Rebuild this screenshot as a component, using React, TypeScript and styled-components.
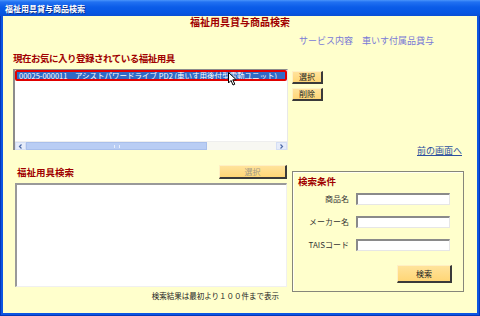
import React from "react";
import styled, { createGlobalStyle } from "styled-components";

const GlobalStyle = createGlobalStyle`
  html, body {
    margin: 0;
    padding: 0;
  }
  body {
    font-family: "Noto Sans CJK JP", "Noto Sans", sans-serif;
    background: #ffffff;
  }
  * {
    box-sizing: border-box;
  }
`;

const Window = styled.div`
  position: relative;
  width: 480px;
  height: 316px;
  display: flex;
  flex-direction: column;
  background: #0c55e2;
  border-left: 1px solid #0536b8;
  border-right: 1px solid #0536b8;
  border-bottom: 1px solid #0536b8;
`;

const TitleBar = styled.div`
  height: 16px;
  margin: 0 -1px;
  padding: 0 5px;
  display: flex;
  align-items: center;
  background: linear-gradient(
    to bottom,
    #4a94fb 0,
    #2171f2 2px,
    #0b5ce8 45%,
    #0656e3 80%,
    #0a4fd4 100%
  );
  color: #ffffff;
  font-size: 8px;
  font-weight: bold;
  text-shadow: 1px 1px 0 #0a2e8a;
`;

const Body = styled.div`
  flex: 1;
  margin: 0 2px 2px;
  background: #ffffcc;
  display: flex;
  flex-direction: column;
`;

const PageTitle = styled.h1`
  margin: 0;
  font-size: 10px;
  line-height: 11px;
  font-weight: bold;
  color: #a00000;
  text-align: center;
`;

const ServiceLine = styled.div`
  margin-top: 8px;
  padding-left: 296px;
  font-size: 9px;
  line-height: 12px;
  color: #7a7ad6;
  white-space: pre;
`;

const SectionLabel = styled.div<{ $indent?: number }>`
  padding-left: ${(p) => p.$indent ?? 0}px;
  font-size: 9.5px;
  line-height: 12px;
  font-weight: bold;
  color: #a00000;
  white-space: nowrap;
`;

const FavLabel = styled(SectionLabel)`
  margin-top: 5px;
  letter-spacing: -0.5px;
`;

const UpperRow = styled.div`
  margin-top: 5px;
  padding-left: 10px;
  height: 87px;
  display: flex;
  gap: 4px;
`;

const ListBox = styled.div`
  width: 275px;
  height: 81px;
  display: flex;
  flex-direction: column;
  background: #ffffff;
  border-style: solid;
  border-width: 1px 1px 0 2px;
  border-color: #8c8c8c #e8e8e8 #e8e8e8 #8c8c8c;
`;

const SelectedRow = styled.div`
  height: 11px;
  padding-left: 2px;
  background: #316ac5;
  border: 2px solid #e00000;
  border-radius: 2px;
  color: #ffffff;
  font-size: 7.5px;
  line-height: 7px;
  white-space: pre;
  overflow: hidden;
`;

const ListSpace = styled.div`
  flex: 1;
`;

const ScrollBar = styled.div`
  height: 9px;
  display: flex;
  background: #f7f7f2;
  border-top: 1px solid #eeeeee;
`;

const ScrollArrow = styled.div`
  width: 11px;
  display: flex;
  align-items: center;
  justify-content: center;
  background: #e6ecfa;
  border: 1px solid #d4def4;
`;

const ScrollThumb = styled.div<{ $width: number }>`
  width: ${(p) => p.$width}px;
  display: flex;
  align-items: center;
  justify-content: center;
  background: #b9cdf4;
  border: 1px solid #a9bfeb;
`;

const Grip = styled.div`
  width: 6px;
  height: 3px;
  border-left: 1px solid #e7eefc;
  border-right: 1px solid #e7eefc;
`;

const ScrollTrack = styled.div`
  flex: 1;
`;

const SideColumn = styled.div`
  flex: 1;
  display: flex;
  flex-direction: column;
  gap: 4px;
  padding-top: 2px;
  padding-right: 15px;
`;

const ActionButton = styled.button<{ $w: number; $h: number; $disabled?: boolean }>`
  width: ${(p) => p.$w}px;
  height: ${(p) => p.$h}px;
  padding: 0;
  display: flex;
  align-items: center;
  justify-content: center;
  font-family: inherit;
  font-size: 8px;
  line-height: 1;
  color: ${(p) => (p.$disabled ? "#a39a86" : "#202020")};
  background: linear-gradient(to bottom, #ffe39c, #ffd676);
  border-style: solid;
  border-width: 1px 2px 2px 1px;
  border-color: #fff0c4 #3a3a3a #3a3a3a #fff0c4;
  cursor: default;
`;

const BackLink = styled.a`
  margin-top: auto;
  align-self: flex-end;
  font-size: 9px;
  line-height: 10px;
  color: #2d4f9e;
  text-decoration: underline;
`;

const LowerGrid = styled.div`
  padding-left: 12px;
  display: grid;
  grid-template-columns: 272px 172px;
  column-gap: 5px;
`;

const LeftColumn = styled.div`
  display: flex;
  flex-direction: column;
`;

const SearchHeader = styled.div`
  margin-top: 9px;
  height: 14px;
  padding-left: 2px;
  display: flex;
  align-items: center;
  justify-content: space-between;
`;

const ResultBox = styled.div`
  margin-top: 4px;
  height: 104px;
  background: #ffffff;
  border-style: solid;
  border-width: 2px 1px 1px 2px;
  border-color: #999999 #f0f0f0 #f0f0f0 #999999;
`;

const Footnote = styled.div`
  margin-top: 4px;
  padding-right: 8px;
  text-align: right;
  font-size: 7.5px;
  line-height: 10px;
  color: #222222;
`;

const CriteriaBox = styled.div`
  margin-top: 15px;
  height: 121px;
  padding: 3px 11px 0 0;
  display: flex;
  flex-direction: column;
  border: 1px solid #86867a;
  box-shadow: inset 1px 1px 0 #fffff4;
`;

const FieldGrid = styled.div`
  margin-top: 6px;
  display: grid;
  grid-template-columns: 56px 94px;
  grid-auto-rows: 12px;
  column-gap: 7px;
  row-gap: 11px;
`;

const FieldLabel = styled.label`
  text-align: right;
  font-size: 8px;
  line-height: 12px;
  color: #333333;
  white-space: nowrap;
`;

const TextInput = styled.input`
  width: 94px;
  height: 12px;
  padding: 0;
  background: #ffffff;
  border-style: solid;
  border-width: 2px 1px 1px 2px;
  border-color: #8a8a8a #e6e6e6 #e6e6e6 #8a8a8a;
  outline: none;
`;

const SearchButtonRow = styled.div`
  margin-top: 14px;
  display: flex;
  justify-content: flex-end;
`;

const Pointer = styled.svg`
  position: absolute;
  left: 227px;
  top: 72px;
`;

function Chevron({ dir }: { dir: "left" | "right" }) {
  return (
    <svg width="5" height="5" viewBox="0 0 5 5">
      <path
        d={dir === "left" ? "M3.5 0.5 L1.5 2.5 L3.5 4.5" : "M1.5 0.5 L3.5 2.5 L1.5 4.5"}
        fill="none"
        stroke="#4d6aa8"
        strokeWidth="1.2"
      />
    </svg>
  );
}

const fields = ["商品名", "メーカー名", "TAISコード"];

export default function App() {
  return (
    <>
      <GlobalStyle />
      <Window>
        <TitleBar>福祉用具貸与商品検索</TitleBar>
        <Body>
          <PageTitle>福祉用具貸与商品検索</PageTitle>
          <ServiceLine>サービス内容　車いす付属品貸与</ServiceLine>
          <FavLabel $indent={10}>現在お気に入り登録されている福祉用具</FavLabel>
          <UpperRow>
            <ListBox>
              <SelectedRow>
                00025-000011　アシストパワードライブ PD2 (車いす用後付型電動ユニット)　|
              </SelectedRow>
              <ListSpace />
              <ScrollBar>
                <ScrollArrow>
                  <Chevron dir="left" />
                </ScrollArrow>
                <ScrollThumb $width={181}>
                  <Grip />
                </ScrollThumb>
                <ScrollTrack />
                <ScrollArrow>
                  <Chevron dir="right" />
                </ScrollArrow>
              </ScrollBar>
            </ListBox>
            <SideColumn>
              <ActionButton $w={31} $h={13}>選択</ActionButton>
              <ActionButton $w={31} $h={13}>削除</ActionButton>
              <BackLink>前の画面へ</BackLink>
            </SideColumn>
          </UpperRow>
          <LowerGrid>
            <LeftColumn>
              <SearchHeader>
                <SectionLabel>福祉用具検索</SectionLabel>
                <ActionButton $w={68} $h={14} $disabled>
                  選択
                </ActionButton>
              </SearchHeader>
              <ResultBox />
              <Footnote>検索結果は最初より１００件まで表示</Footnote>
            </LeftColumn>
            <CriteriaBox>
              <SectionLabel $indent={5}>検索条件</SectionLabel>
              <FieldGrid>
                {fields.map((f) => (
                  <React.Fragment key={f}>
                    <FieldLabel>{f}</FieldLabel>
                    <TextInput />
                  </React.Fragment>
                ))}
              </FieldGrid>
              <SearchButtonRow>
                <ActionButton $w={55} $h={18}>検索</ActionButton>
              </SearchButtonRow>
            </CriteriaBox>
          </LowerGrid>
        </Body>
        <Pointer width="10" height="14" viewBox="0 0 10 14">
          <path d="M0.5 0.5 L0.5 11 L3 8.5 L5 13 L6.8 12.2 L4.8 7.8 L8.3 7.8 Z" fill="#ffffff" stroke="#000000" strokeWidth="1" />
        </Pointer>
      </Window>
    </>
  );
}
